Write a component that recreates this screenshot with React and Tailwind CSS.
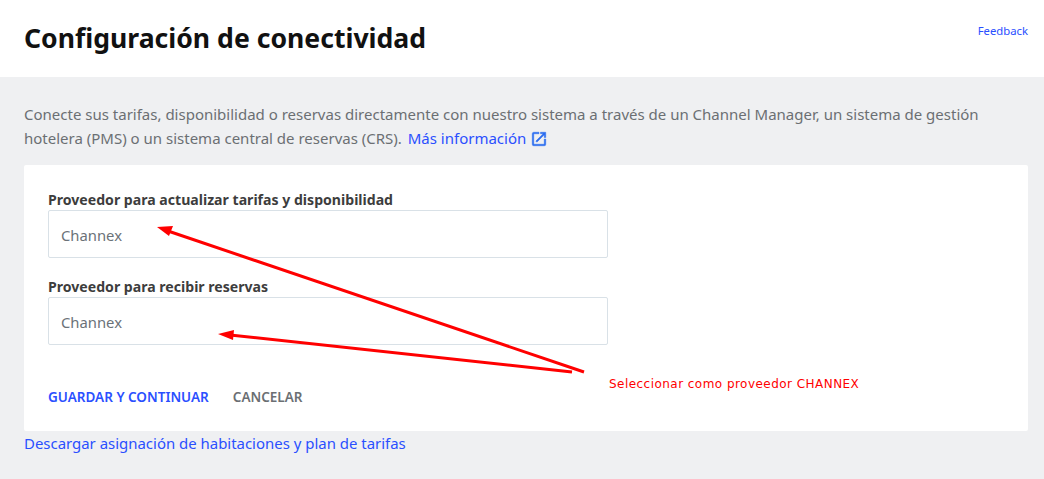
const OpenInNew = () => (
  <svg className="inline-block w-[18px] h-[18px] ml-[4px] align-[-4px] text-[#2a6cf0]" viewBox="0 0 24 24" fill="currentColor" stroke="currentColor" strokeWidth="0.6">
    <path d="M19 19H5V5h7V3H5a2 2 0 0 0-2 2v14a2 2 0 0 0 2 2h14a2 2 0 0 0 2-2v-7h-2v7zM14 3v2h3.59l-9.83 9.83 1.41 1.41L19 6.41V10h2V3h-7z" />
  </svg>
);

const Field = ({ label }) => (
  <div className="w-[560px]">
    <div className="text-[14.1px] leading-[20px] font-bold text-[#3d3d3d]">{label}</div>
    <div className="h-[48px] border border-[#d9e1e7] rounded-[2px] flex items-center pl-3 pt-[2px] text-[14.8px] text-[#6b7278]">
      Channex
    </div>
  </div>
);

export default function App() {
  return (
    <div className="relative h-[479px] bg-[#eff0f2] overflow-hidden font-['Noto_Sans',sans-serif]">
      <div className="h-[77px] bg-white flex justify-between pl-6 pr-4">
        <h1 className="text-[26.6px] leading-[38px] font-bold text-[#111] mt-[19px]">Configuración de conectividad</h1>
        <a className="text-[11.3px] leading-[16px] text-[#2a4fff] mt-[23px]">Feedback</a>
      </div>

      <div className="pl-6 pr-4 pt-[25px]">
        <p className="text-[15px] leading-[24px] text-[#6b6f73]">
          Conecte sus tarifas, disponibilidad o reservas directamente con nuestro sistema a través de un Channel Manager, un sistema de gestión hotelera (PMS) o un sistema central de reservas (CRS).{' '}
          <a className="text-[#2a4fff] ml-[2px]">Más información</a>
          <OpenInNew />
        </p>

        <div className="bg-white mt-[15px] h-[266px] rounded-[2px] px-6 pt-[25px]">
          <div className="flex flex-col gap-[19px]">
            <Field label="Proveedor para actualizar tarifas y disponibilidad" />
            <Field label="Proveedor para recibir reservas" />
          </div>
          <div className="flex gap-6 mt-[42px] text-[13.5px] leading-[20px] font-semibold">
            <span className="text-[#2a4fff]">GUARDAR Y CONTINUAR</span>
            <span className="text-[#6b6f73]">CANCELAR</span>
          </div>
        </div>

        <a className="block text-[14.95px] leading-[24px] text-[#2a4fff]">Descargar asignación de habitaciones y plan de tarifas</a>
      </div>

      {/* annotation drawn on top of the screenshot */}
      <svg className="absolute inset-0 pointer-events-none" width="1044" height="479">
        <line x1="584" y1="372" x2="168" y2="231" stroke="#ff0000" strokeWidth="3" />
        <polygon points="157,227 173,226 169,236" fill="#ff0000" />
        <line x1="572" y1="372" x2="230" y2="335" stroke="#ff0000" strokeWidth="3" />
        <polygon points="218,334 234,330 233,340" fill="#ff0000" />
      </svg>
      <span className="absolute left-[609px] top-[376px] text-[12px] leading-[16px] tracking-[0.46px] text-[#ff0000] font-['DejaVu_Sans',sans-serif]">
        Seleccionar como proveedor CHANNEX
      </span>
    </div>
  );
}
